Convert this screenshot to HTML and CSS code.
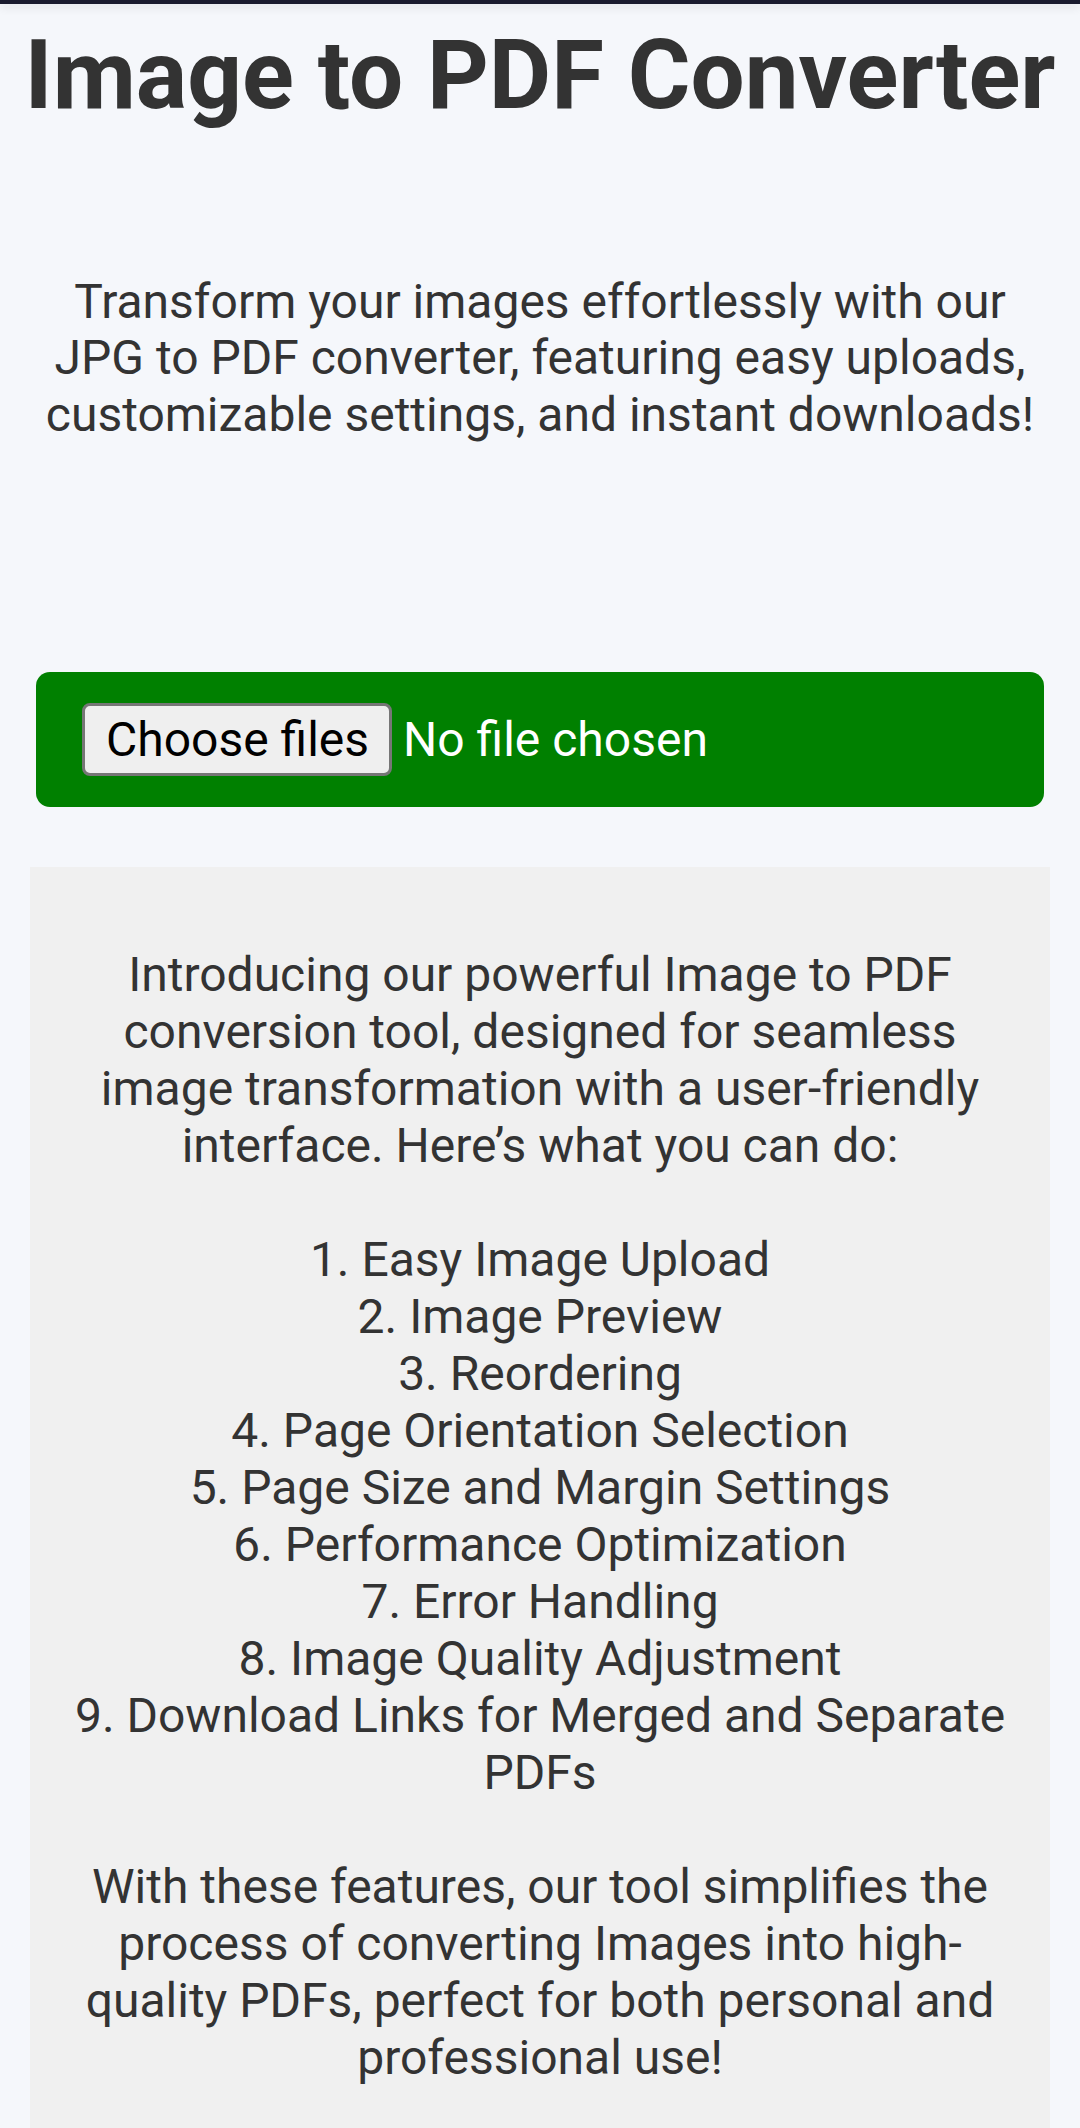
FILE: index.html
```html
<!DOCTYPE html>
<html lang="en">
<head>
<meta charset="utf-8">
<title>Image to PDF Converter</title>
<link rel="stylesheet" href="styles.css">
</head>
<body>
<div class="topbar"></div>
<main class="page">
  <h1 class="title">Image to PDF Converter</h1>
  <p class="subtitle">Transform your images effortlessly with our JPG to PDF converter, featuring easy uploads, customizable settings, and instant downloads!</p>
  <div class="upload">
    <label class="file-btn">Choose files</label>
    <span class="file-status">No file chosen</span>
  </div>
  <section class="info">
    <p class="info-text">Introducing our powerful Image to PDF conversion tool, designed for seamless image transformation with a user-friendly interface. Here’s what you can do:</p>
    <ol class="features">
      <li>Easy Image Upload</li>
      <li>Image Preview</li>
      <li>Reordering</li>
      <li>Page Orientation Selection</li>
      <li>Page Size and Margin Settings</li>
      <li>Performance Optimization</li>
      <li>Error Handling</li>
      <li>Image Quality Adjustment</li>
      <li>Download Links for Merged and Separate PDFs</li>
    </ol>
    <p class="info-text">With these features, our tool simplifies the process of converting Images into high-quality PDFs, perfect for both personal and professional use!</p>
  </section>
</main>
</body>
</html>
```

FILE: styles.css
```css
html, body {
  margin: 0;
  padding: 0;
}

body {
  background: #f5f7fb;
  font-family: Roboto, "Noto Sans", "Liberation Sans", sans-serif;
  color: #333333;
  height: 2128px;
  overflow: hidden;
}

.topbar {
  height: 4px;
  background: #1a1b2e;
  box-shadow: 0 3px 10px rgba(0, 0, 0, 0.12);
  position: relative;
}

.page {
  display: flex;
  flex-direction: column;
  align-items: center;
}

.title {
  margin: 15px 0 0;
  font-size: 96px;
  font-weight: 700;
  line-height: 112.5px;
  text-align: center;
  color: #333333;
  white-space: nowrap;
}

.subtitle {
  margin: 142px 0 0;
  width: 1004px;
  font-size: 48px;
  line-height: 56.5px;
  text-align: center;
}

.upload {
  margin-top: 229px;
  width: 1008px;
  box-sizing: border-box;
  padding: 31px 46px;
  background: #008000;
  border-radius: 14px;
  display: flex;
  align-items: center;
  gap: 11px;
}

.file-btn {
  box-sizing: border-box;
  height: 73px;
  padding: 0 20px 0 21px;
  display: flex;
  align-items: center;
  background: #efefef;
  border: 3px solid #767676;
  border-radius: 8px;
  color: #000000;
  font-size: 48px;
}

.file-status {
  color: #ffffff;
  font-size: 48px;
}

.info {
  margin-top: 60px;
  width: 1020px;
  box-sizing: border-box;
  padding: 79px 40px 60px;
  background: #f0f0f0;
  font-size: 48px;
  line-height: 57px;
  text-align: center;
}

.info-text {
  margin: 0;
}

.features {
  margin: 57px 0;
  padding: 0;
  list-style: decimal inside;
}
```
